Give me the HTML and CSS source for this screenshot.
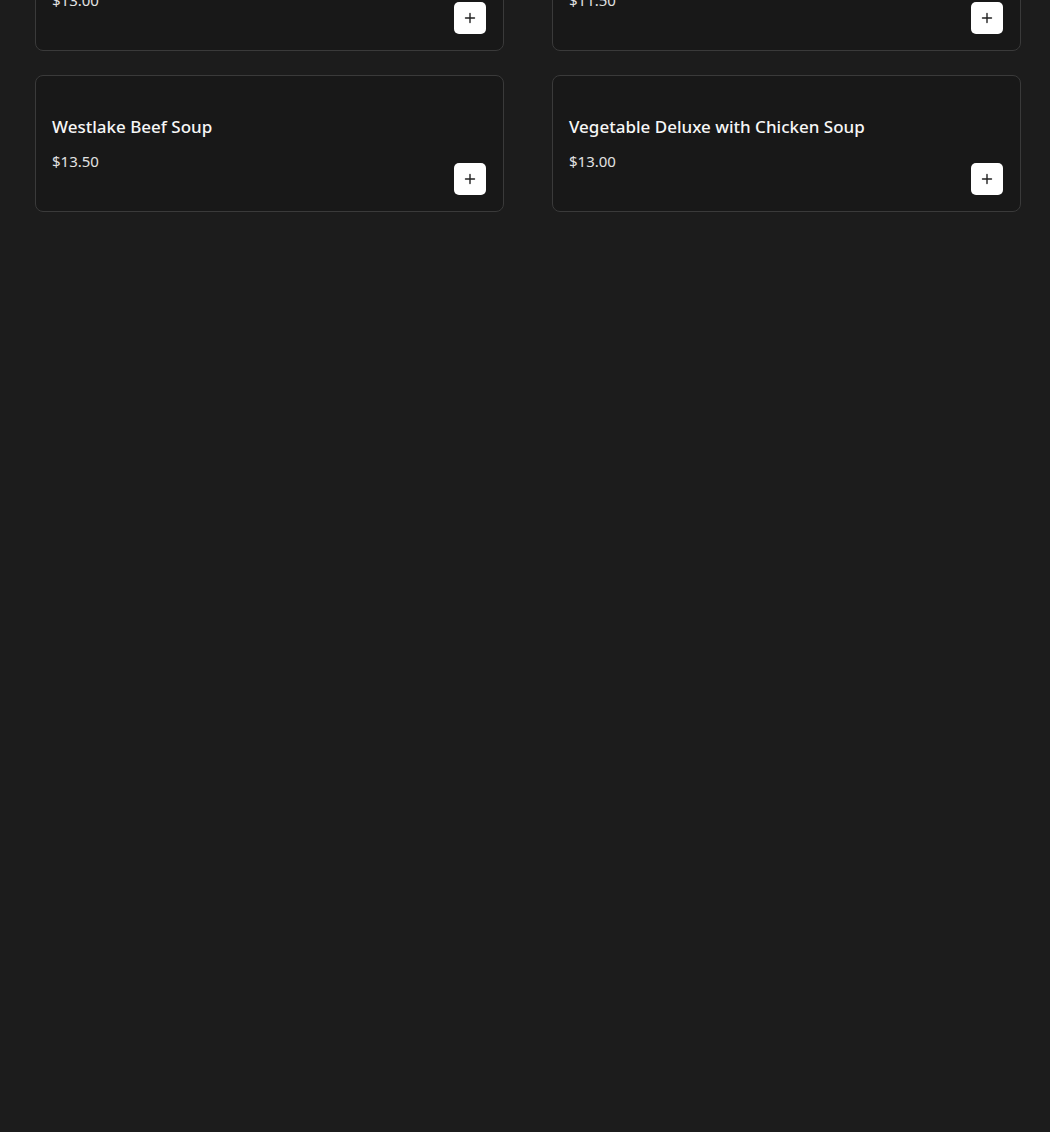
FILE: index.html
```html
<!DOCTYPE html>
<html>
<head>
<title>Soups</title>
<link rel="stylesheet" href="styles.css">
</head>
<body>

<div class="menu">
<!-- soups -->
<div class="menu-grid">
<div class="item-card">
<div class="item-info">
<h3 class="item-name">Hot and Sour Soup</h3>
<p class="item-price">$13.00</p>
</div>
<button class="add-btn" aria-label="Add">
<svg viewBox="0 0 12 12" width="12" height="12"><path d="M6 1.5v9M1.5 6h9" stroke="#222" stroke-width="1.4" stroke-linecap="round"/></svg>
</button>
</div>

<div class="item-card">
<div class="item-info">
<h3 class="item-name">Wonton Soup</h3>
<p class="item-price">$11.50</p>
</div>
<button class="add-btn" aria-label="Add">
<svg viewBox="0 0 12 12" width="12" height="12"><path d="M6 1.5v9M1.5 6h9" stroke="#222" stroke-width="1.4" stroke-linecap="round"/></svg>
</button>
</div>

<div class="item-card">
<div class="item-info">
<h3 class="item-name">Westlake Beef Soup</h3>
<p class="item-price">$13.50</p>
</div>
<button class="add-btn" aria-label="Add">
<svg viewBox="0 0 12 12" width="12" height="12"><path d="M6 1.5v9M1.5 6h9" stroke="#222" stroke-width="1.4" stroke-linecap="round"/></svg>
</button>
</div>

<div class="item-card">
<div class="item-info">
<h3 class="item-name">Vegetable Deluxe with Chicken Soup</h3>
<p class="item-price">$13.00</p>
</div>
<button class="add-btn" aria-label="Add">
<svg viewBox="0 0 12 12" width="12" height="12"><path d="M6 1.5v9M1.5 6h9" stroke="#222" stroke-width="1.4" stroke-linecap="round"/></svg>
</button>
</div>
</div>
</div>

</body>
</html>
```

FILE: styles.css
```css
* {
margin: 0;
padding: 0;
box-sizing: border-box;
}

body {
background: #1c1c1c;
color: #f2f2f2;
font-family: 'Noto Sans', 'Open Sans', sans-serif;
min-height: 100vh;
}

.menu {
padding: 0 29px 0 35px;
margin-top: -86px;
}

/* item grid */
.menu-grid {
display: grid;
grid-template-columns: 1fr 1fr;
column-gap: 48px;
row-gap: 24px;
}

.item-card {
background: #181818;
border: 1px solid #3a3a3a;
border-radius: 8px;
padding: 16px 17px 16px 16px;
height: 137px;
display: flex;
align-items: flex-end;
justify-content: space-between;
}

.item-info {
align-self: stretch;
padding-top: 23px;
}

.item-name {
font-size: 17px;
font-weight: 500;
line-height: 24px;
color: #f6f6f6;
}

.item-price {
font-size: 15px;
line-height: 24px;
margin-top: 10px;
color: #e2e2e2;
}

.add-btn {
width: 32px;
height: 32px;
background: #fff;
border: none;
border-radius: 5px;
display: flex;
align-items: center;
justify-content: center;
cursor: pointer;
flex-shrink: 0;
}
```
